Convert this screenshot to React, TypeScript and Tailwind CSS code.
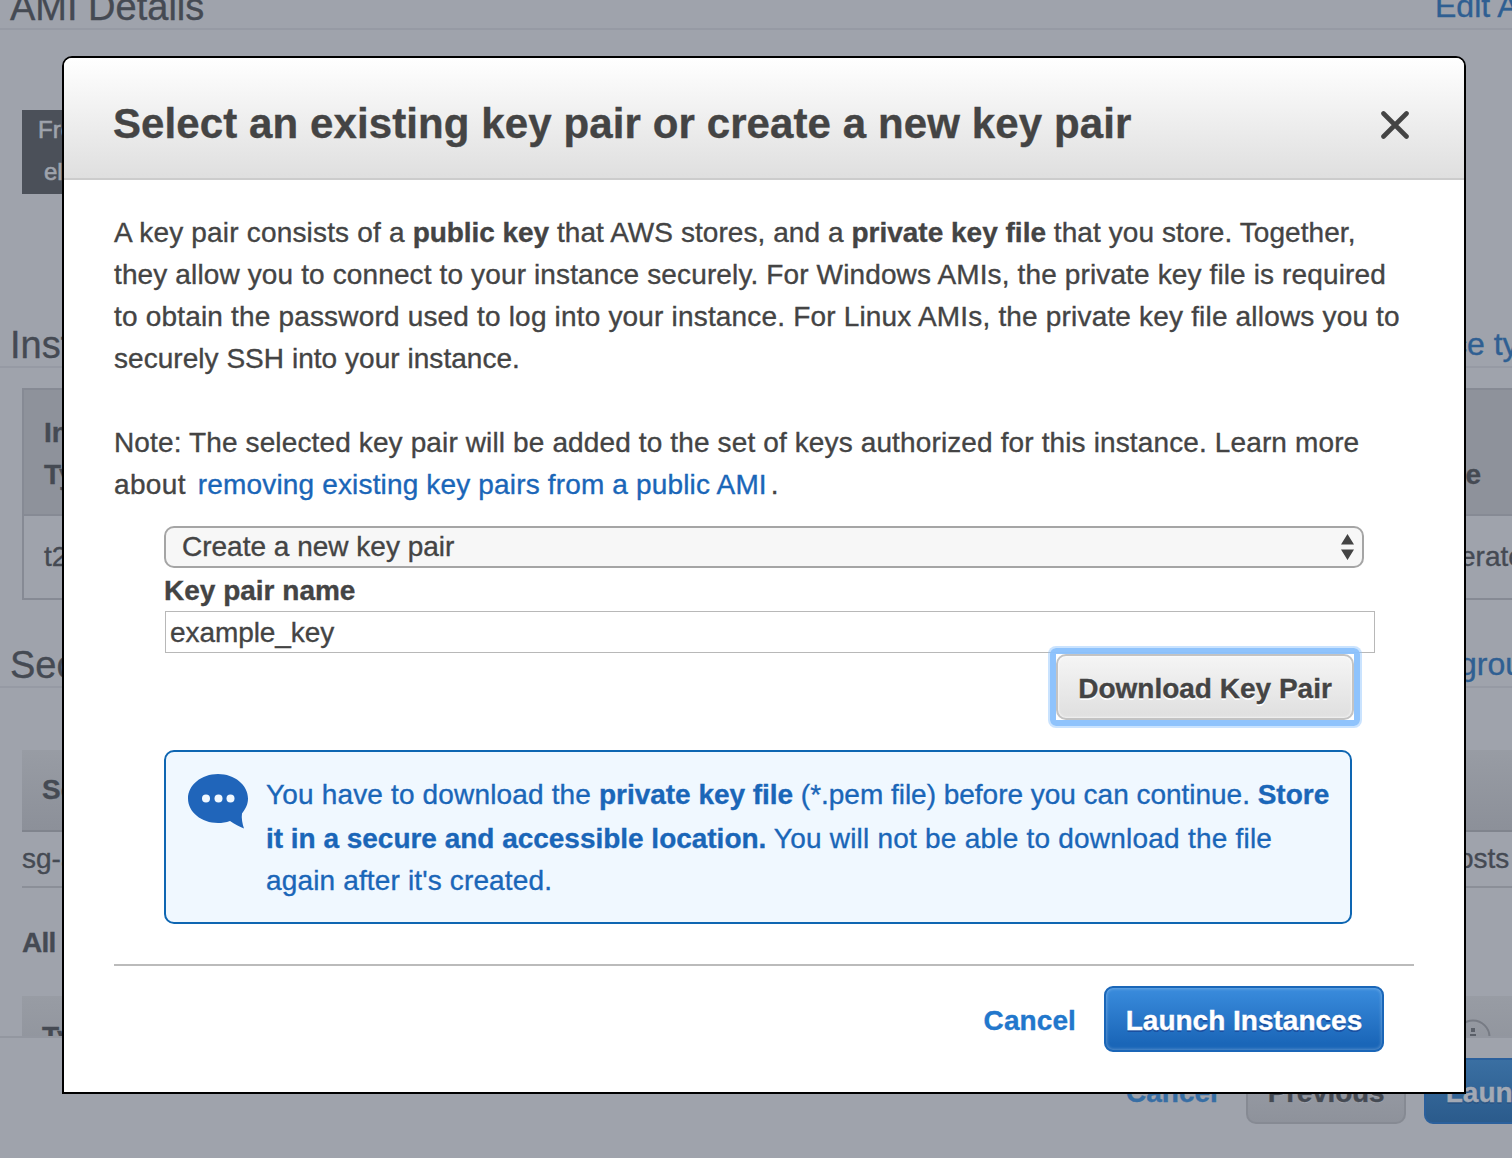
import type { ReactNode } from "react";

function SectionHeading({ title, link, indent }: { title: string; link: string; indent: string }) {
  return (
    <div className="flex h-[50px] shrink-0 items-end border-b-2 border-[#969aa4] leading-[42px]">
      <span className="w-[1424px] shrink-0 pl-[10px] text-[38px]">{title}</span>
      <span className={`shrink-0 text-[32px] leading-[44px] text-[#2f5f92] ${indent}`}>{link}</span>
    </div>
  );
}

function Backdrop() {
  return (
    <div className="flex h-full w-full flex-col overflow-hidden whitespace-nowrap bg-[#9fa3ac] text-[28px] text-[#454a53]">
      <div className="flex h-[1036px] shrink-0 flex-col overflow-hidden">
        <div className="-mt-[20px] shrink-0">
          <SectionHeading title="AMI Details" link="Edit AMI" indent="pl-[11px]" />
        </div>
        <div className="mt-20 ml-[22px] h-[84px] w-[150px] shrink-0 bg-[#4b5059] pl-4 text-[24px] leading-[42px] text-[#9fa3ac] [-webkit-text-stroke:0.6px_#9fa3ac]">
          <div className="-mt-px">Free tier</div>
          <div className="pl-[6px]">eligible</div>
        </div>
        <div className="mt-[124px] shrink-0">
          <SectionHeading title="Instance Type" link="ce type" indent="pl-[27px]" />
        </div>
        <div className="mt-5 ml-[22px] flex h-[212px] w-[1600px] shrink-0 flex-col border-2 border-[#868a94]">
          <div className="flex h-[126px] items-center border-b-2 border-[#868a94] bg-[#8e929b] pt-[4px] font-bold leading-[42px]">
            <span className="w-[1286px] pl-5">
              Instance
              <br />
              Type
            </span>
            <span className="w-[170px] pt-[42px] text-right leading-[42px]">Performance</span>
          </div>
          <div className="flex grow items-center">
            <span className="w-[1436px] pl-5">t2.micro</span>
            <span>erate</span>
          </div>
        </div>
        <div className="mt-[38px] shrink-0">
          <SectionHeading title="Security Groups" link="groups" indent="pl-[35px]" />
        </div>
        <div className="mt-[62px] ml-[22px] w-[1600px] shrink-0">
          <div className="flex h-[82px] items-center border-b-2 border-[#80848d] bg-linear-to-b from-[#989ca4] to-[#8c9099] pl-5 font-bold">
            Security Group ID
          </div>
          <div className="flex h-14 items-center border-b-2 border-[#8b8f98]">
            <span className="w-[1436px]">sg-a1b2</span>
            <span>osts</span>
          </div>
          <div className="mt-[34px] h-[42px] font-bold tracking-[-0.8px] leading-[42px]">All selected security groups</div>
          <div className="mt-[32px] flex h-[82px] bg-linear-to-b from-[#989ca4] to-[#8c9099] pl-5 font-bold leading-[82px]">
            <span className="w-[1413px]">Type</span>
            <svg className="mt-[23px]" width="36" height="36" viewBox="0 0 36 36" fill="none">
              <circle cx="18" cy="18" r="16.500" stroke="#777b84" strokeWidth="2" />
              <path d="M16 9h4v4h-4zM15 15h6v11h-6z" fill="#5a5f68" />
            </svg>
          </div>
        </div>
      </div>
      <div className="flex h-[122px] shrink-0 items-start border-t-2 border-[#9397a0] pt-5 font-bold leading-[66px]">
        <span className="ml-[1126px] w-[120px] shrink-0 pt-[2px] text-[#376ea4]">Cancel</span>
        <span className="h-[66px] w-40 shrink-0 rounded-[10px] border-2 border-[#868a93] bg-linear-to-b from-[#9b9fa8] to-[#8e929b] text-center tracking-[-0.2px] [text-shadow:0_1px_#a4a8b1]">
          Previous
        </span>
        <span className="ml-[18px] h-[66px] w-[280px] shrink-0 rounded-[9px] border-2 border-[#2b609c] bg-linear-to-b from-[#3a6fa2] to-[#2b5b8c] text-center text-[#a3a9b4] [text-shadow:0_2px_#2b5584]">
          Launch Instances
        </span>
      </div>
    </div>
  );
}

function Line({ children, className = "" }: { children: ReactNode; className?: string }) {
  return <span className={`block whitespace-nowrap ${className}`}>{children}</span>;
}

function SpeechBubble() {
  return (
    <svg className="mt-[22px] ml-[22px] shrink-0" width="60" height="56" viewBox="0 0 60 56">
      <path
        d="M30 0C46.5 0 60 11 60 24.500C60 30.500 57.500 35 54 39.500C53.200 44 54.500 50 56 54.500C51.500 52.500 46.500 50 42 47C38 48.500 34 49 30 49C13.500 49 0 38 0 24.500C0 11 13.500 0 30 0Z"
        fill="#2065ba"
      />
      <circle cx="18" cy="24.500" r="4" fill="#f0f8ff" />
      <circle cx="30.500" cy="24.500" r="4" fill="#f0f8ff" />
      <circle cx="42.500" cy="24.500" r="4" fill="#f0f8ff" />
    </svg>
  );
}

function KeyPairDialog() {
  return (
    <div className="absolute top-[56px] left-[62px] flex h-[1038px] w-[1404px] flex-col overflow-hidden rounded-t-[10px] border-2 border-black bg-white text-[28px] leading-[42px] text-[#444]">
      <header className="flex h-[122px] shrink-0 items-center justify-between border-b-2 border-[#ccc] bg-linear-to-b from-white to-[#dfdfdf] pr-[55px] pl-[49px]">
        <h1 className="mt-3 whitespace-nowrap text-[42px] font-bold tracking-[0.1px]">
          Select an existing key pair or create a new key pair
        </h1>
        <svg className="mt-[14px]" width="28" height="28" viewBox="0 0 28 28" fill="none" aria-label="Close">
          <path d="M2.500 2.500L25.500 25.500M25.500 2.500L2.500 25.500" stroke="#444" strokeWidth="4.600" strokeLinecap="round" />
        </svg>
      </header>

      <div className="px-[50px] pt-[32px]">
        <p>
          <Line>
            <span className="tracking-[0.18px]">A key pair consists of a </span>
            <b className="tracking-[-0.05px]">public key</b>
            <span className="tracking-[0.06px]"> that AWS stores, and a </span>
            <b>private key file</b>
            <span className="tracking-[0.07px]"> that you store. Together,</span>
          </Line>
          <Line className="tracking-[0.13px]">
            they allow you to connect to your instance securely. For Windows AMIs, the private key file is required
          </Line>
          <Line className="tracking-[0.18px]">
            to obtain the password used to log into your instance. For Linux AMIs, the private key file allows you to
          </Line>
          <Line className="tracking-[0.04px]">securely SSH into your instance.</Line>
        </p>
        <p className="mt-[42px]">
          <Line className="tracking-[0.13px]">
            Note: The selected key pair will be added to the set of keys authorized for this instance. Learn more
          </Line>
          <Line className="tracking-[0.16px]">
            <span className="tracking-[0.35px]">about</span>
            <a className="mr-[4px] ml-[12px] text-[#1a66b8]">removing existing key pairs from a public AMI</a>.
          </Line>
        </p>

        <div className="ml-[50px] flex flex-col pt-[20px]">
          <div className="flex h-[42px] w-[1200px] items-center justify-between rounded-[10px] border-2 border-[#a5a5a5] bg-[#f7f7f7] pr-2 pl-4">
            <span className="-mt-px">Create a new key pair</span>
            <svg width="13" height="26" viewBox="0 0 13 26" fill="#444">
              <path d="M6.500 0L13 10.500H0ZM0 15.500H13L6.500 26Z" />
            </svg>
          </div>
          <label className="mt-[2px] h-[41px] font-bold">Key pair name</label>
          <div className="ml-px flex h-[42px] w-[1210px] items-center border border-[#b8b8b8] pt-px pl-1 tracking-[-0.08px]">
            example_key
          </div>
          <button className="relative mt-[1px] ml-[892px] h-[66px] w-[298px] rounded-[10px] border-2 border-[#c3c3c3] bg-linear-to-b from-[#f5f5f5] to-[#dfdfdf] pt-[3px] font-bold text-[#444] shadow-[inset_0_0_2px_1px_rgba(255,255,255,0.6)] [text-shadow:0_2px_white]">
            Download Key Pair
            <span className="absolute -inset-[8px] rounded-[6px] border-[6px] border-[#89c0fc]/95 shadow-[0_0_0_2px_rgba(137,192,252,0.45)]" />
          </button>

          <div className="mt-[30px] flex h-[174px] w-[1188px] rounded-[10px] border-2 border-[#0e66b2] bg-[#f0f8ff] text-[#1a66b8]">
            <SpeechBubble />
            <div className="mt-[22px] ml-[18px]">
              <Line className="h-11">
                <span className="tracking-[0.16px]">You have to download the </span>
                <b className="tracking-[-0.03px]">private key file</b>
                <span className="tracking-[-0.02px]"> (*.pem file) before you can continue. </span>
                <b>Store</b>
              </Line>
              <Line>
                <b className="tracking-[-0.02px]">it in a secure and accessible location.</b>
                <span className="tracking-[0.22px]"> You will not be able to download the file</span>
              </Line>
              <Line className="tracking-[0.15px]">again after it&apos;s created.</Line>
            </div>
          </div>
        </div>

        <footer className="mt-10 flex items-center justify-end border-t-2 border-[#bbb] pt-5 pr-[30px] font-bold">
          <a className="mt-[3px] mr-7 tracking-[0.1px] text-[#2277cc]">Cancel</a>
          <button className="h-[66px] w-[280px] rounded-[9px] border-2 border-[#1a66b8] bg-linear-to-b from-[#388adb] from-5% to-[#1a66b8] to-90% pt-[3px] text-white shadow-[inset_0_0_3px_1px_rgba(255,255,255,0.25)] [text-shadow:0_2px_#1a4fa0]">
            Launch Instances
          </button>
        </footer>
      </div>
    </div>
  );
}

export default function App() {
  return (
    <main className="relative h-[1158px] w-[1512px] overflow-hidden font-['Liberation_Sans',Arial,sans-serif] [-webkit-text-stroke:0.35px_currentColor]">
      <Backdrop />
      <KeyPairDialog />
    </main>
  );
}
